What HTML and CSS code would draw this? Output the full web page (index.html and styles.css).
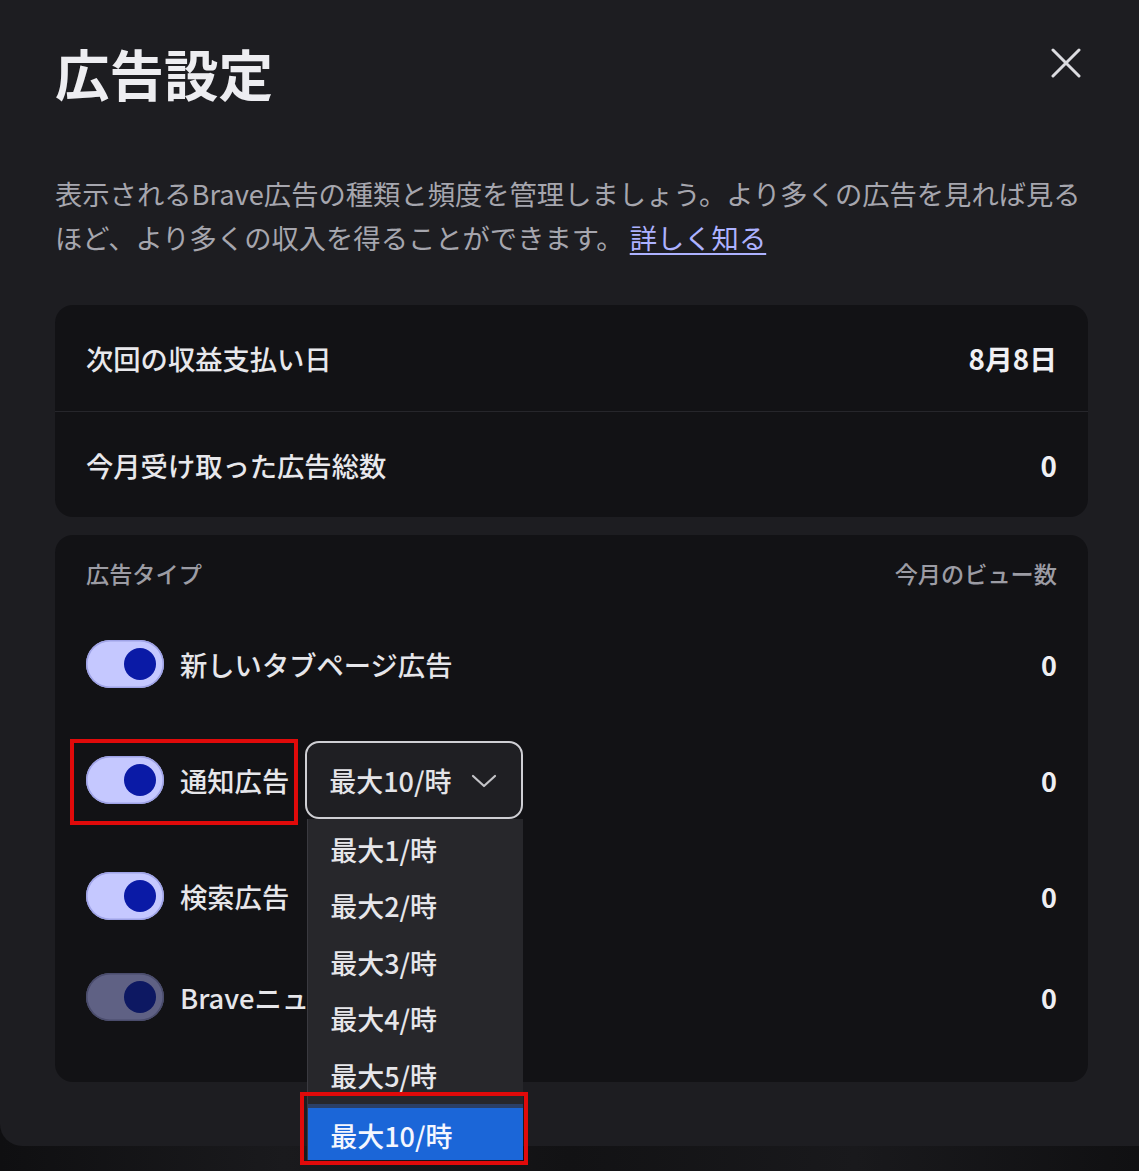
FILE: index.html
```html
<!DOCTYPE html>
<html lang="ja">
<head>
<meta charset="utf-8">
<title>広告設定</title>
<link rel="stylesheet" href="styles.css">
</head>
<body>
<div class="dialog">
  <div class="header">
    <h1 class="title">広告設定</h1>
    <button class="close" aria-label="閉じる">
      <svg width="30" height="30" viewBox="0 0 30 30"><path d="M2 2 L28 28 M28 2 L2 28" stroke="#dcdce0" stroke-width="3" stroke-linecap="round" fill="none"/></svg>
    </button>
  </div>
  <p class="desc">表示されるBrave広告の種類と頻度を管理しましょう。より多くの広告を見れば見る<br>ほど、より多くの収入を得ることができます。 <a class="link" href="#">詳しく知る</a></p>

  <div class="card stats">
    <div class="stat-row">
      <span class="stat-label">次回の収益支払い日</span>
      <span class="stat-value">8月8日</span>
    </div>
    <div class="stat-row">
      <span class="stat-label">今月受け取った広告総数</span>
      <span class="stat-value">0</span>
    </div>
  </div>

  <div class="card types">
    <div class="types-head">
      <span>広告タイプ</span>
      <span>今月のビュー数</span>
    </div>
    <div class="type-list">
      <div class="type-row">
        <div class="type-main">
          <span class="toggle"><span class="knob"></span></span>
          <span class="type-label">新しいタブページ広告</span>
        </div>
        <span class="type-value">0</span>
      </div>
      <div class="type-row tall">
        <div class="type-main">
          <div class="mark-wrap">
            <span class="toggle"><span class="knob"></span></span>
            <span class="type-label">通知広告</span>
            <span class="mark mark-a"></span>
          </div>
          <div class="select-wrap">
            <div class="select">
              <span>最大10/時</span>
              <svg class="chev" width="26" height="14" viewBox="0 0 26 14"><path d="M2 2 L13 12 L24 2" stroke="#c4c4c8" stroke-width="2.2" fill="none" stroke-linecap="round" stroke-linejoin="round"/></svg>
            </div>
            <ul class="menu">
              <li>最大1/時</li>
              <li>最大2/時</li>
              <li>最大3/時</li>
              <li>最大4/時</li>
              <li>最大5/時</li>
              <li class="selected">最大10/時<span class="mark mark-b"></span></li>
            </ul>
          </div>
        </div>
        <span class="type-value">0</span>
      </div>
      <div class="type-row">
        <div class="type-main">
          <span class="toggle"><span class="knob"></span></span>
          <span class="type-label">検索広告</span>
        </div>
        <span class="type-value">0</span>
      </div>
      <div class="type-row">
        <div class="type-main">
          <span class="toggle disabled"><span class="knob"></span></span>
          <span class="type-label">Braveニュース広告</span>
        </div>
        <span class="type-value">0</span>
      </div>
    </div>
  </div>
</div>
</body>
</html>
```

FILE: styles.css
```css
* { box-sizing: border-box; }
html, body {
  margin: 0;
  padding: 0;
}
body {
  width: 1139px;
  height: 1171px;
  overflow: hidden;
  background: linear-gradient(90deg, #0f0f11 0%, #1a1a1d 25%, #121214 50%, #19191c 75%, #101012 100%);
  font-family: "Noto Sans CJK JP", "Noto Sans", sans-serif;
  color: #e9e9ed;
}
.dialog {
  width: 1139px;
  height: 1146px;
  background: #1d1d21;
  border-bottom-left-radius: 22px;
  padding: 41px 51px 0 55px;
}
.header {
  display: flex;
  justify-content: space-between;
  align-items: flex-start;
}
.title {
  margin: 0;
  font-size: 54.5px;
  line-height: 64px;
  font-weight: 700;
  color: #ededf1;
}
.close {
  background: none;
  border: 0;
  padding: 0;
  margin: 7px 7px 0 0;
  width: 30px;
  height: 30px;
  display: flex;
}
.desc {
  margin: 66px 0 0 0;
  font-size: 27.3px;
  line-height: 44px;
  color: #a6a6ae;
  font-weight: 400;
  white-space: nowrap;
}
.link {
  color: #adb2ff;
  text-decoration: underline;
  text-underline-offset: 4px;
  text-decoration-thickness: 2px;
}
.card {
  background: #121215;
  border-radius: 18px;
}
.stats {
  margin-top: 46px;
}
.stat-row {
  height: 106px;
  padding: 0 31px;
  display: flex;
  justify-content: space-between;
  align-items: center;
  font-size: 27.3px;
}
.stat-row + .stat-row {
  border-top: 1px solid #26262b;
}
.stat-label {
  font-weight: 500;
  color: #e8e8ec;
}
.stat-value {
  font-weight: 700;
  color: #f0f0f4;
  font-size: 27.8px;
}
.types {
  margin-top: 18px;
  padding: 24px 31px 61px 31px;
}
.types-head {
  display: flex;
  justify-content: space-between;
  font-size: 23.2px;
  line-height: 28px;
  font-weight: 500;
  color: #9c9ca4;
}
.type-list {
  margin-top: 53px;
  display: flex;
  flex-direction: column;
  gap: 53px;
}
.type-row {
  display: flex;
  justify-content: space-between;
  align-items: center;
  height: 48px;
}
.type-row.tall {
  height: 78px;
}
.type-main {
  display: flex;
  align-items: center;
  gap: 16px;
}
.mark-wrap {
  position: relative;
  display: flex;
  align-items: center;
  gap: 16px;
}
.toggle {
  width: 78px;
  height: 48px;
  border-radius: 24px;
  background: #c5c8ff;
  box-shadow: inset 0 0 0 1.5px #9ea2e6;
  display: flex;
  align-items: center;
  justify-content: flex-end;
  padding-right: 8px;
  flex: none;
}
.knob {
  width: 32px;
  height: 32px;
  border-radius: 50%;
  background: #0a1aa6;
}
.toggle.disabled {
  background: #5f6184;
  box-shadow: inset 0 0 0 1.5px #4a4c6c;
}
.toggle.disabled .knob {
  background: #0d1862;
}
.type-label {
  font-size: 27.3px;
  font-weight: 500;
  color: #e6e6ea;
  white-space: nowrap;
}
.type-value {
  font-size: 27px;
  font-weight: 700;
  color: #eeeef2;
}
.mark {
  position: absolute;
  border: 4px solid #e00a0a;
  pointer-events: none;
}
.mark-a {
  left: -16px;
  top: -17px;
  width: 228px;
  height: 86px;
}
.select-wrap {
  position: relative;
}
.select {
  width: 218px;
  height: 78px;
  border: 2px solid #cfcfd4;
  border-radius: 14px;
  background: #1f1f23;
  display: flex;
  align-items: center;
  justify-content: space-between;
  padding: 0 24px 0 22px;
  font-size: 27px;
  font-weight: 500;
  color: #e4e4e8;
}
.chev {
  margin-top: 2px;
}
.menu {
  position: absolute;
  top: 78px;
  left: 2px;
  width: 216px;
  margin: 0;
  padding: 3px 0 0 0;
  list-style: none;
  background: #27272b;
  border-left: 1px solid #3a3a40;
  z-index: 5;
}
.menu li {
  height: 56.4px;
  line-height: 56.4px;
  padding-left: 22px;
  font-size: 27px;
  font-weight: 500;
  color: #e6e6ea;
  white-space: nowrap;
}
.menu li.selected {
  position: relative;
  background: #1b66d8;
  color: #f4f6ff;
  border-top: 4px solid #2b3f66;
}
.mark-b {
  left: -8px;
  top: -16px;
  width: 228px;
  height: 73px;
}
```
